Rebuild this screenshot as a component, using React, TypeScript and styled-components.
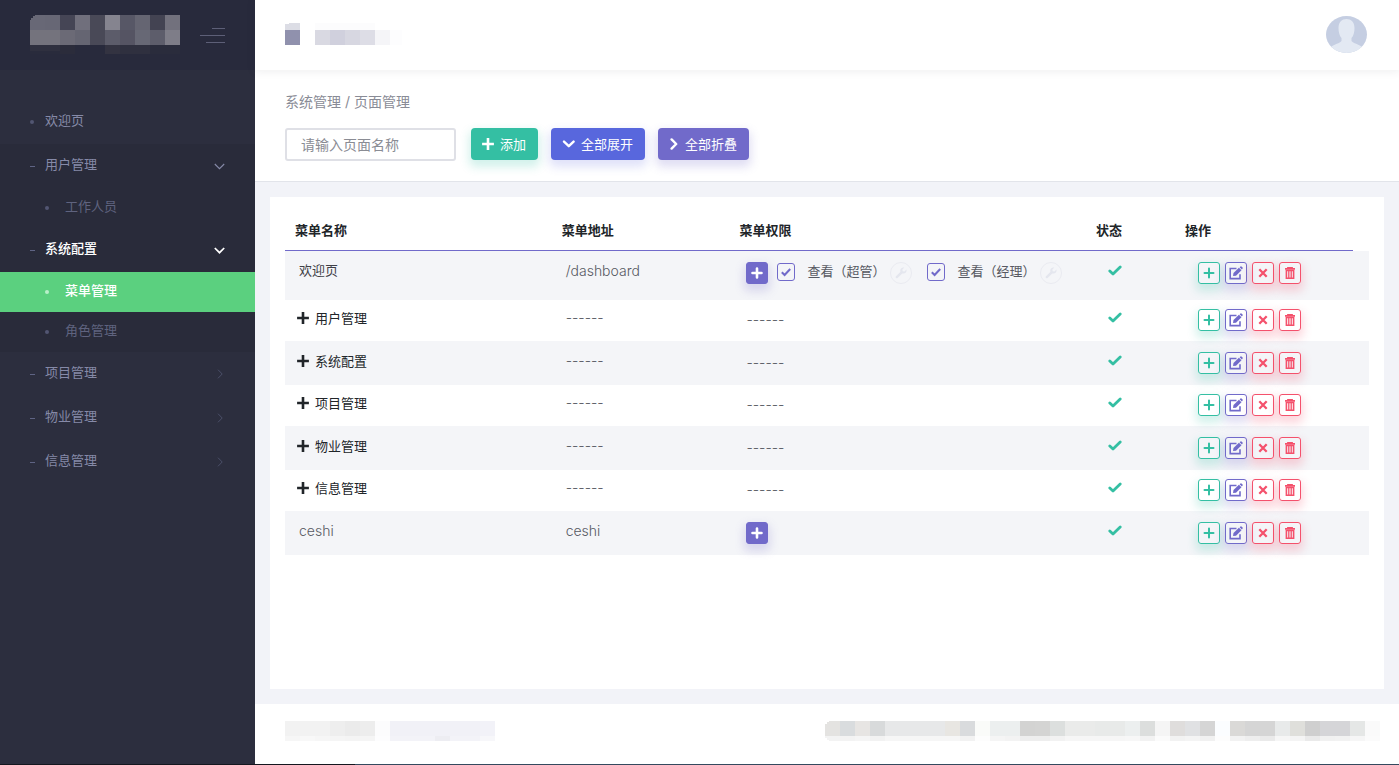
import React from 'react';
import styled, { createGlobalStyle, css } from 'styled-components';

const fontStack = `Inter, "Noto Sans CJK SC", sans-serif`;

const GlobalStyle = createGlobalStyle`
  *, *::before, *::after { box-sizing: border-box; }
  body {
    margin: 0;
    background: #f2f3f8;
    color: #575962;
    font-family: ${fontStack};
    font-size: 13px;
    font-weight: 400;
  }
  button, input { font: inherit; }
  button { cursor: pointer; }
`;

const tones = {
  green: { main: '#34bfa3', shadow: 'rgba(52, 191, 163, 0.22)' },
  blue: { main: '#5867dd', shadow: 'rgba(88, 103, 221, 0.19)' },
  purple: { main: '#716aca', shadow: 'rgba(113, 106, 202, 0.22)' },
  red: { main: '#f4516c', shadow: 'rgba(244, 81, 108, 0.24)' },
};
type Tone = keyof typeof tones;

/* ---------- shell ---------- */

const Shell = styled.div`
  display: grid;
  grid-template-columns: 255px minmax(0, 1fr);
  grid-template-rows: 1fr 1px;
  min-height: 100vh;
`;

const BottomEdge = styled.div`
  grid-column: 1 / -1;
  background: linear-gradient(90deg, #14171f 0 355px, #34495e 355px);
`;

const Page = styled.div`
  display: flex;
  flex-direction: column;
`;

/* ---------- sidebar ---------- */

const Sidebar = styled.aside`
  background: #2c2e3e;
`;

const Brand = styled.div`
  display: flex;
  align-items: center;
  justify-content: space-between;
  height: 70px;
  padding: 0 30px;
  background: #282a3c;
`;

const PlainButton = styled.button`
  display: flex;
  padding: 0;
  border: 0;
  background: none;
`;

const Nav = styled.nav`
  padding-top: 30px;
`;

const NavList = styled.ul`
  margin: 0;
  padding: 0;
  list-style: none;
`;

const NavItem = styled.li<{ $open?: boolean }>`
  background: ${(p) => (p.$open ? '#292b3a' : 'transparent')};
`;

const NavLink = styled.a<{ $strong?: boolean }>`
  display: flex;
  align-items: center;
  height: 44px;
  padding: 0 30px;
  color: ${(p) => (p.$strong ? '#ffffff' : '#868aa8')};
  font-weight: ${(p) => (p.$strong ? 500 : 400)};
  text-decoration: none;
`;

const SubLink = styled(NavLink)<{ $active?: boolean }>`
  height: 40px;
  padding-left: 45px;
  color: #5f637f;
  ${(p) =>
    p.$active &&
    css`
      background: #5bd07f;
      color: #ffffff;
      font-weight: 500;
    `}
`;

const Bullet = styled.span<{ $dash?: boolean; $sub?: boolean; $active?: boolean }>`
  width: ${(p) => (p.$dash ? 5 : 4)}px;
  height: ${(p) => (p.$dash ? 1 : 4)}px;
  margin-right: ${(p) => (p.$sub ? 16 : p.$dash ? 10 : 11)}px;
  border-radius: ${(p) => (p.$dash ? 0 : 2)}px;
  background: ${(p) => (p.$active ? '#b9efc9' : p.$dash ? '#5f6484' : '#525672')};
`;

const NavText = styled.span`
  flex: 1;
  padding-bottom: 6px;
`;

/* ---------- header ---------- */

const Header = styled.header`
  display: flex;
  align-items: center;
  justify-content: space-between;
  position: relative;
  height: 70px;
  padding: 0 32px 0 30px;
  background: #ffffff;
  box-shadow: 0 1px 8px 1px rgba(69, 65, 78, 0.08);
`;

const SubHeader = styled.section`
  padding: 22px 30px 20px;
  border-bottom: 1px solid #e2e4ea;
  background: #ffffff;
`;

const Breadcrumb = styled.div`
  margin-bottom: 16px;
  color: #898b96;
  font-size: 14px;
  line-height: 20px;
`;

const Toolbar = styled.form`
  display: flex;
  align-items: flex-start;
  gap: 13px;
`;

const SearchBox = styled.input`
  width: 171px;
  height: 33px;
  margin-right: 2px;
  padding: 0 14px;
  border: 2px solid #dfe0e6;
  border-radius: 3px;
  background: #ffffff;
  color: #575962;
  font-size: 14px;
  &::placeholder {
    color: #8a8c94;
    opacity: 1;
  }
`;

const ToolButton = styled.button<{ $tone: Tone }>`
  display: inline-flex;
  align-items: center;
  gap: 6px;
  height: 32px;
  padding: 0 12px 0 11px;
  border: 0;
  border-radius: 4px;
  background: ${(p) => tones[p.$tone].main};
  box-shadow: 0 5px 10px 2px ${(p) => tones[p.$tone].shadow};
  color: #ffffff;
  white-space: nowrap;
`;

const ToolText = styled.span`
  padding-bottom: 2px;
`;

/* ---------- content ---------- */

const Content = styled.main`
  flex: 1;
  display: flex;
  padding: 15px;
`;

const Card = styled.section`
  flex: 1;
  min-width: 0;
  padding: 15px;
  background: #ffffff;
`;

const Table = styled.table`
  width: 100%;
  border-collapse: separate;
  border-spacing: 0;
  table-layout: fixed;
`;

const Col = styled.col<{ $width?: string }>`
  width: ${(p) => p.$width ?? 'auto'};
`;

const HeadCell = styled.th`
  height: 39px;
  padding: 0 10px 4px;
  border-bottom: 1px solid #716aca;
  color: #212529;
  font-weight: 600;
  text-align: left;
`;

const GutterCell = styled.td`
  padding: 0;
`;

const Row = styled.tr<{ $tall?: boolean }>`
  height: 41px;
  &:nth-child(odd) {
    height: ${(p) => (p.$tall ? 49 : 44)}px;
    background: #f4f5f8;
  }
`;

const Cell = styled.td<{ $indent: number }>`
  padding: 9px 0 9px ${(p) => p.$indent}px;
  line-height: 18px;
  vertical-align: top;
  tr:nth-child(odd) > & {
    padding: 11px 0 10px ${(p) => p.$indent}px;
  }
`;

const StatusCell = styled(Cell)`
  color: #34bfa3;
`;

const LatinText = styled.span`
  font-size: 14px;
  font-weight: 300;
`;

const PageName = styled.div`
  color: #3f4047;
  line-height: 16px;
`;

const Expander = styled.button`
  display: flex;
  align-items: center;
  gap: 6px;
  height: 18px;
  padding: 0;
  border: 0;
  margin-left: -2px;
  background: none;
  color: #212529;
`;

const PermissionLine = styled.div`
  display: flex;
  align-items: center;
  gap: 9px;
  height: 22px;
`;

const Permission = styled.span`
  display: flex;
  align-items: center;
  gap: 5px;
  margin-right: 6px;
`;

const PermissionLabel = styled.label`
  display: flex;
  align-items: center;
  gap: 12px;
  position: relative;
  padding-bottom: 2px;
  white-space: nowrap;
`;

const PermissionText = styled.span`
  padding-bottom: 2px;
  line-height: 16px;
`;

const Checkbox = styled.input`
  appearance: none;
  width: 18px;
  height: 18px;
  margin: 0;
  border: 1px solid #716aca;
  border-radius: 3px;
  & + svg {
    position: absolute;
    left: 4px;
    top: 4px;
    color: #716aca;
    visibility: hidden;
  }
  &:checked + svg {
    visibility: visible;
  }
`;

const WrenchButton = styled.button`
  display: flex;
  align-items: center;
  justify-content: center;
  width: 22px;
  height: 22px;
  padding: 0;
  border: 1px solid #eaebf1;
  border-radius: 50%;
  background: none;
  color: #e4e6ee;
`;

const Actions = styled.div`
  display: flex;
  gap: 5px;
`;

const IconButton = styled.button<{ $tone: Tone; $solid?: boolean }>`
  display: flex;
  align-items: center;
  justify-content: center;
  flex: none;
  width: 22px;
  height: 22px;
  padding: 0;
  border: 1px solid ${(p) => tones[p.$tone].main};
  border-radius: 3px;
  background: ${(p) => (p.$solid ? tones[p.$tone].main : 'transparent')};
  box-shadow: 0 5px 10px 2px ${(p) => tones[p.$tone].shadow};
  color: ${(p) => (p.$solid ? '#ffffff' : tones[p.$tone].main)};
`;

const Footer = styled.footer`
  display: flex;
  align-items: center;
  justify-content: space-between;
  height: 60px;
  padding: 0 19px 6px 30px;
  background: #ffffff;
`;

/* ---------- drawings ---------- */

type StrokeProps = { d: string; w: number; h: number; thick: number; round?: boolean };
const Stroke = ({ d, w, h, thick, round }: StrokeProps) => (
  <svg width={w} height={h} viewBox={`0 0 ${w} ${h}`} fill="none" stroke="currentColor"
    strokeWidth={thick} strokeLinecap={round ? 'round' : 'butt'} strokeLinejoin={round ? 'round' : 'miter'} aria-hidden="true">
    <path d={d} />
  </svg>
);

const PlusIcon = ({ thick = 2.6 }: { thick?: number }) => (
  <Stroke w={12} h={12} thick={thick} d="M6 0.1V11.9M0.1 6H11.9" />
);
const SmallPlus = ({ thick }: { thick: number }) => (
  <Stroke w={12} h={12} thick={thick} round d="M6 1.5V10.5M1.5 6H10.5" />
);
const CheckIcon = () => <Stroke w={14} h={18} thick={2.8} round d="M1.8 9L5 12L12.2 5" />;
const CrossIcon = () => <Stroke w={10} h={10} thick={2.3} d="M1.3 1.3L8.7 8.7M8.7 1.3L1.3 8.7" />;
const EditIcon = () => (
  <svg width="14" height="14" viewBox="0 0 14 14" fill="none" stroke="currentColor" aria-hidden="true">
    <path d="M7.5 2.5H1.2V12.6H11V8.2" strokeWidth="1.6" />
    <path d="M4 10.1L4.5 7.1L9.9 1.7L12.5 4.3L7 9.7Z" fill="currentColor" stroke="none" />
    <path d="M10.6 1.2L11.5 0.4Q12 0 12.5 0.5L13.6 1.6Q14 2.1 13.6 2.6L12.9 3.6Z" fill="currentColor" stroke="none" />
  </svg>
);
const TrashIcon = () => (
  <svg width="10" height="12" viewBox="0 0 10 12" fill="none" stroke="currentColor" aria-hidden="true">
    <path d="M0 1.9H10M3 1.4V0.6H7V1.4" strokeWidth="1.8" />
    <path d="M1.4 3.5H8.6V11.2H1.4Z" strokeWidth="1.6" />
    <path d="M3.8 4V11M6.2 4V11" strokeWidth="1.3" />
  </svg>
);
const WrenchIcon = () => (
  <svg width="12" height="12" viewBox="0 0 12 12" aria-hidden="true">
    <path d="M11.4 2.6L9.5 4.5L7.7 4.2L7.4 2.5L9.3 0.6C7.6 0 5.6 1.1 5.3 2.9C5.2 3.5 5.3 4.1 5.5 4.7L0.8 9.4C0 10.3 1.6 12 2.6 11.1L7.3 6.4C9.6 7.3 12.2 5.2 11.4 2.6Z" fill="currentColor" />
  </svg>
);

const MenuIcon = () => (
  <svg width="25" height="16" viewBox="0 0 25 16" stroke="#5d5f77" aria-hidden="true">
    <path d="M12 1.5H25M0 8.5H25M6 15.5H25" />
  </svg>
);

const Avatar = () => (
  <svg width="41" height="38" viewBox="0 0 41 38" role="img" aria-label="用户头像">
    <defs>
      <clipPath id="avatarClip"><ellipse cx="20.5" cy="18.5" rx="20.5" ry="18.5" /></clipPath>
    </defs>
    <g clipPath="url(#avatarClip)">
      <rect width="41" height="38" fill="#c5cee2" />
      <path d="M12.5 12C12.5 6 16 3 20.5 3S28.5 6 28.5 12C28.5 16 27.5 20 25.5 22V25C27 27.5 33 28 36 31V38H5V31C8 28 14 27.5 15.5 25V22C13.5 20 12.5 16 12.5 12Z" fill="#e3e9f3" />
    </g>
  </svg>
);

type Block = [x: number, y: number, width: number, height: number, fill: string];
const Mosaic = ({ width, height, blocks, label }: { width: number; height: number; blocks: Block[]; label: string }) => (
  <svg width={width} height={height} viewBox={`0 0 ${width} ${height}`} shapeRendering="crispEdges" role="img" aria-label={label}>
    {blocks.map(([x, y, w, h, fill], i) => (
      <rect key={i} x={x} y={y} width={w} height={h} fill={fill} />
    ))}
  </svg>
);

const cells = (fills: string, y: number, h: number): Block[] =>
  fills.split(' ').map((fill, i) => [i * 15, y, 15, h, `#${fill}`]);

const logoBlocks: Block[] = [
  ...cells('686876 676775 454555 706f7c 494957 85848f 575766 656572 434352 72717d', 0, 15),
  ...cells('74737d 74737d 6b6a76 656572 494957 5c5c6a 555463 676875 5d5d6b 7e7d88', 15, 15),
  ...cells('2f303f 2f303f 2b2c3b 282a3c 282a3c 333341 2f303f 2f303f 2a2c3c 2a2c3c', 30, 9),
  [0, 36, 30, 3, '#292b3c'],
  [0, 0, 5, 1, '#282a3c'],
  [0, 1, 3, 2, '#282a3c'],
  [0, 3, 1, 2, '#282a3c'],
];

const titleBlocks: Block[] = [
  [0, 0, 15, 7, '#dcdde5'],
  [0, 0, 4, 1, '#ffffff'],
  [0, 7, 15, 15, '#9091ad'],
  [30, 0, 60, 7, '#fcfcfd'],
  [30, 7, 15, 15, '#d9d9e2'],
  [45, 7, 15, 15, '#d0d0dd'],
  [60, 7, 15, 15, '#d7d7e1'],
  [75, 7, 15, 15, '#dddde6'],
  [90, 7, 15, 15, '#f5f5f8'],
  [105, 7, 12, 15, '#fdfdfe'],
];

const footerLeft: Block[] = [
  ...cells('f2f2f2 f2f2f2 f2f2f2 eeeeee ebebeb ededed fcfcfd f1f1f7 f1f1f7 f1f1f7 f1f1f7 f1f1f7 f1f1f7 f2f2f8', 0, 15),
  ...cells('f6f6f6 f8f8f8 f6f6f6 f5f5f5 f4f4f4 f5f5f5 fdfdfe f3f3f8 f3f3f8 f3f3f8 ededf2 f3f3f8 f3f3f8 f7f7fa', 15, 5),
];

const footerRight: Block[] = [
  ...cells(
    'e4e3e1 d9dcde e7e5e3 d8dadb e7e8e9 e7e8e9 e7e8e9 e7e8e9 e8e6e2 d9dbdd fafbf9 ecefef ecefef d3d3d2 d4d4d3 dcdfde eaebea eaebea e8eae9 e8eae9 ecefef dcdedd f5f5f5 dfdddc e0e1e3 d5d5d5 fbfdff dad9d7 d5d5d5 d5d5d5 e8eaea dfdfdb cfcfcf d5d5d8 d5d5d8 e5e7e6 fafafa',
    0, 15,
  ),
  ...cells(
    'f3f3f3 f3f3f3 f5f5f5 f2f2f2 f6f6f6 f6f6f6 f6f6f6 f6f6f6 f6f6f6 f2f2f2 fdfdfd f5f5f5 f3f3f3 eeeeee eeeeee f2f2f2 f6f6f6 f6f6f6 f6f6f6 f6f6f6 f7f7f7 f2f2f2 fbfbfb f2f2f2 f4f4f4 f1f1f1 fdfdfd f2f2f2 eeeeee eaeaea f6f6f6 f4f4f4 eaeaea f1f1f1 f2f2f2 f6f6f6 fbfbfb',
    15, 5,
  ),
  [0, 0, 4, 1, '#ffffff'],
  [0, 1, 2, 2, '#ffffff'],
  [0, 17, 2, 2, '#ffffff'],
  [0, 19, 4, 1, '#ffffff'],
];

/* ---------- data ---------- */

type MenuEntry = { name: string; open?: boolean; strong?: boolean; leaf?: boolean; children?: { name: string; active?: boolean }[] };
const menu: MenuEntry[] = [
  { name: '欢迎页', leaf: true },
  { name: '用户管理', open: true, children: [{ name: '工作人员' }] },
  { name: '系统配置', open: true, strong: true, children: [{ name: '菜单管理', active: true }, { name: '角色管理' }] },
  { name: '项目管理' },
  { name: '物业管理' },
  { name: '信息管理' },
];

type PageRow = { name: string; path?: string; latin?: boolean; permissions?: string[] };
const rows: PageRow[] = [
  { name: '欢迎页', path: '/dashboard', permissions: ['查看（超管）', '查看（经理）'] },
  { name: '用户管理' },
  { name: '系统配置' },
  { name: '项目管理' },
  { name: '物业管理' },
  { name: '信息管理' },
  { name: 'ceshi', path: 'ceshi', latin: true, permissions: [] },
];

const Arrow = ({ entry }: { entry: MenuEntry }) => {
  if (entry.leaf) return null;
  if (entry.open) return <Stroke w={11} h={7} thick={entry.strong ? 1.7 : 1.1} d="M0.8 1L5.5 5.7L10.2 1" />;
  return (
    <svg width="8" height="10" viewBox="0 0 8 10" fill="none" stroke="#4b4f68" aria-hidden="true">
      <path d="M1 0.7L5.2 5L1 9.3" />
    </svg>
  );
};

export default function App() {
  return (
    <>
      <GlobalStyle />
      <Shell>
        <Sidebar>
          <Brand>
            <Mosaic width={150} height={40} blocks={logoBlocks} label="标志" />
            <PlainButton type="button" aria-label="收起菜单"><MenuIcon /></PlainButton>
          </Brand>
          <Nav>
            <NavList>
              {menu.map((entry) => (
                <NavItem key={entry.name} $open={entry.open}>
                  <NavLink href="#" $strong={entry.strong}>
                    <Bullet $dash={!entry.leaf} />
                    <NavText>{entry.name}</NavText>
                    <Arrow entry={entry} />
                  </NavLink>
                  {entry.children && (
                    <NavList>
                      {entry.children.map((child) => (
                        <li key={child.name}>
                          <SubLink href="#" $active={child.active}>
                            <Bullet $sub $active={child.active} />
                            <NavText>{child.name}</NavText>
                          </SubLink>
                        </li>
                      ))}
                    </NavList>
                  )}
                </NavItem>
              ))}
            </NavList>
          </Nav>
        </Sidebar>

        <Page>
          <Header>
            <Mosaic width={117} height={24} blocks={titleBlocks} label="系统名称" />
            <PlainButton type="button" aria-label="用户"><Avatar /></PlainButton>
          </Header>

          <SubHeader>
            <Breadcrumb>系统管理 / 页面管理</Breadcrumb>
            <Toolbar onSubmit={(e) => e.preventDefault()}>
              <SearchBox type="text" aria-label="页面名称" placeholder="请输入页面名称" />
              <ToolButton type="button" $tone="green"><PlusIcon /><ToolText>添加</ToolText></ToolButton>
              <ToolButton type="button" $tone="blue">
                <Stroke w={13} h={10} thick={2.4} round d="M2 2.6L6.8 7.2L11.6 2.6" />
                <ToolText>全部展开</ToolText>
              </ToolButton>
              <ToolButton type="button" $tone="purple">
                <Stroke w={10} h={12} thick={2.4} round d="M2.6 1.4L7.2 6L2.6 10.6" />
                <ToolText>全部折叠</ToolText>
              </ToolButton>
            </Toolbar>
          </SubHeader>

          <Content>
            <Card>
              <Table>
                <colgroup>
                  <Col $width="24.6%" />
                  <Col $width="16.4%" />
                  <Col $width="32.9%" />
                  <Col $width="8.2%" />
                  <Col />
                  <Col $width="16px" />
                </colgroup>
                <thead>
                  <tr>
                    <HeadCell scope="col">菜单名称</HeadCell>
                    <HeadCell scope="col">菜单地址</HeadCell>
                    <HeadCell scope="col">菜单权限</HeadCell>
                    <HeadCell scope="col">状态</HeadCell>
                    <HeadCell scope="col">操作</HeadCell>
                    <GutterCell />
                  </tr>
                </thead>
                <tbody>
                  {rows.map((row) => (
                    <Row key={row.name} $tall={!!row.permissions?.length}>
                      <Cell $indent={14}>
                        {row.path ? (
                          row.latin ? <LatinText>{row.name}</LatinText> : <PageName>{row.name}</PageName>
                        ) : (
                          <Expander type="button"><PlusIcon />{row.name}</Expander>
                        )}
                      </Cell>
                      <Cell $indent={14}><LatinText>{row.path ?? '------'}</LatinText></Cell>
                      <Cell $indent={17}>
                        <PermissionLine>
                          {row.permissions ? (
                            <>
                              <IconButton type="button" $tone="purple" $solid aria-label="添加权限">
                                <SmallPlus thick={2.6} />
                              </IconButton>
                              {row.permissions.map((name) => (
                                <Permission key={name}>
                                  <PermissionLabel>
                                    <Checkbox type="checkbox" defaultChecked />
                                    <Stroke w={10} h={10} thick={2} d="M0.8 5.2L3.6 8L9.2 2" />
                                    <PermissionText>{name}</PermissionText>
                                  </PermissionLabel>
                                  <WrenchButton type="button" aria-label="设置权限"><WrenchIcon /></WrenchButton>
                                </Permission>
                              ))}
                            </>
                          ) : (
                            <LatinText>------</LatinText>
                          )}
                        </PermissionLine>
                      </Cell>
                      <StatusCell $indent={22}>
                        <CheckIcon />
                      </StatusCell>
                      <Cell $indent={23} colSpan={2}>
                        <Actions>
                          <IconButton type="button" $tone="green" aria-label="添加"><SmallPlus thick={2} /></IconButton>
                          <IconButton type="button" $tone="purple" aria-label="编辑"><EditIcon /></IconButton>
                          <IconButton type="button" $tone="red" aria-label="禁用"><CrossIcon /></IconButton>
                          <IconButton type="button" $tone="red" aria-label="删除"><TrashIcon /></IconButton>
                        </Actions>
                      </Cell>
                    </Row>
                  ))}
                </tbody>
              </Table>
            </Card>
          </Content>

          <Footer>
            <Mosaic width={210} height={20} blocks={footerLeft} label="版权" />
            <Mosaic width={555} height={20} blocks={footerRight} label="备案信息" />
          </Footer>
        </Page>
        <BottomEdge />
      </Shell>
    </>
  );
}
